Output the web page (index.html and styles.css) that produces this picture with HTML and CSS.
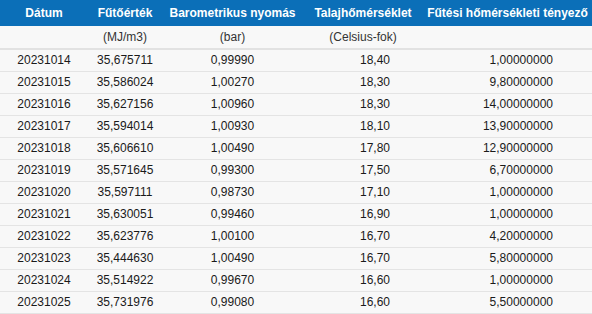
FILE: index.html
```html
<!DOCTYPE html>
<html lang="hu">
<head>
<meta charset="utf-8">
<title>Gáz adatok</title>
<link rel="stylesheet" href="styles.css">
</head>
<body>
<table class="data">
  <colgroup>
    <col class="c1"><col class="c2"><col class="c3"><col class="c4"><col class="c5">
  </colgroup>
  <thead>
    <tr class="head">
      <th>Dátum</th><th>Fűtőérték</th><th>Barometrikus nyomás</th><th>Talajhőmérséklet</th><th>Fűtési hőmérsékleti tényező</th>
    </tr>
    <tr class="units">
      <td></td><td>(MJ/m3)</td><td>(bar)</td><td>(Celsius-fok)</td><td></td>
    </tr>
  </thead>
  <tbody>
    <tr><td class="d">20231014</td><td class="f">35,675711</td><td class="b">0,99990</td><td class="t">18,40</td><td class="h">1,00000000</td></tr>
    <tr><td class="d">20231015</td><td class="f">35,586024</td><td class="b">1,00270</td><td class="t">18,30</td><td class="h">9,80000000</td></tr>
    <tr><td class="d">20231016</td><td class="f">35,627156</td><td class="b">1,00960</td><td class="t">18,30</td><td class="h">14,00000000</td></tr>
    <tr><td class="d">20231017</td><td class="f">35,594014</td><td class="b">1,00930</td><td class="t">18,10</td><td class="h">13,90000000</td></tr>
    <tr><td class="d">20231018</td><td class="f">35,606610</td><td class="b">1,00490</td><td class="t">17,80</td><td class="h">12,90000000</td></tr>
    <tr><td class="d">20231019</td><td class="f">35,571645</td><td class="b">0,99300</td><td class="t">17,50</td><td class="h">6,70000000</td></tr>
    <tr><td class="d">20231020</td><td class="f">35,597111</td><td class="b">0,98730</td><td class="t">17,10</td><td class="h">1,00000000</td></tr>
    <tr><td class="d">20231021</td><td class="f">35,630051</td><td class="b">0,99460</td><td class="t">16,90</td><td class="h">1,00000000</td></tr>
    <tr><td class="d">20231022</td><td class="f">35,623776</td><td class="b">1,00100</td><td class="t">16,70</td><td class="h">4,20000000</td></tr>
    <tr><td class="d">20231023</td><td class="f">35,444630</td><td class="b">1,00490</td><td class="t">16,70</td><td class="h">5,80000000</td></tr>
    <tr><td class="d">20231024</td><td class="f">35,514922</td><td class="b">0,99670</td><td class="t">16,60</td><td class="h">1,00000000</td></tr>
    <tr><td class="d">20231025</td><td class="f">35,731976</td><td class="b">0,99080</td><td class="t">16,60</td><td class="h">5,50000000</td></tr>
  </tbody>
</table>
</body>
</html>
```

FILE: styles.css
```css
html, body {
  margin: 0;
  padding: 0;
  background: #ffffff;
}
body {
  font-family: "Liberation Sans", Arial, sans-serif;
  font-size: 12px;
  color: #1a1a1a;
}
.data {
  width: 592px;
  border-collapse: separate;
  border-spacing: 0;
  table-layout: fixed;
}
.c1 { width: 88px; }
.c2 { width: 74px; }
.c3 { width: 141px; }
.c4 { width: 120px; }
.c5 { width: 169px; }

.head th {
  background: #0b6fb8;
  color: #ffffff;
  font-weight: bold;
  line-height: 26px;
  padding: 0;
  text-align: center;
  white-space: nowrap;
}
.units td {
  background: #f8f8f8;
  color: #333333;
  line-height: 22px;
  padding: 0;
  text-align: center;
  border-bottom: 2px solid #e2e2e2;
}
tbody td {
  background: #f8f8f8;
  line-height: 21px;
  padding: 0;
  border-bottom: 1px solid #e4e4e4;
  white-space: nowrap;
}
.d, .f, .b { text-align: center; }
.t { text-align: right; padding-right: 33px; }
.h { text-align: right; padding-right: 39px; }
```
